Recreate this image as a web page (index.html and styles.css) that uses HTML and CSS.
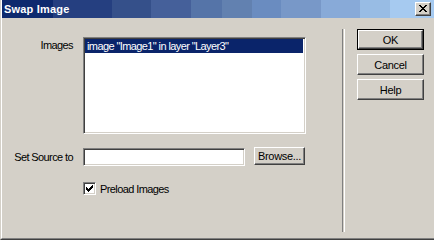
FILE: index.html
```html
<!DOCTYPE html>
<html>
<head>
<meta charset="utf-8">
<link rel="stylesheet" href="styles.css">
</head>
<body>
<div class="window">
  <div class="frame">
    <div class="titlebar">
      <span class="title">Swap Image</span>
      <div class="close">
        <svg width="8" height="7" viewBox="0 0 8 7" shape-rendering="crispEdges"><path fill="#000" d="M0 0h2v1H0z M6 0h2v1H6z M1 1h2v1H1z M5 1h2v1H5z M2 2h4v1H2z M3 3h2v1H3z M2 4h4v1H2z M1 5h2v1H1z M5 5h2v1H5z M0 6h2v1H0z M6 6h2v1H6z"/></svg>
      </div>
    </div>
    <div class="client">
      <div class="form">
        <div class="label label-top">Images</div>
        <div class="listbox">
          <div class="item selected">image "Image1" in layer "Layer3"</div>
        </div>
        <div class="label label-src">Set Source to</div>
        <div class="source-row">
          <div class="textbox"></div>
          <div class="btn browse">Browse...</div>
        </div>
        <div></div>
        <div class="check">
          <span class="box">
            <svg width="7" height="7" viewBox="0 0 7 7" shape-rendering="crispEdges"><path fill="#000" d="M0 2h1v3H0z M1 3h1v3H1z M2 4h1v3H2z M3 3h1v3H3z M4 2h1v3H4z M5 1h1v3H5z M6 0h1v3H6z"/></svg>
          </span>
          <span class="check-text">Preload Images</span>
        </div>
      </div>
      <div class="sep"></div>
      <div class="buttons">
        <div class="btn default"><div class="btn-inner">OK</div></div>
        <div class="btn">Cancel</div>
        <div class="btn">Help</div>
      </div>
    </div>
  </div>
</div>
</body>
</html>
```
FILE: styles.css
```css
html, body {
  margin: 0;
  padding: 0;
  background: #d4d0c8;
}
body {
  font-family: "Liberation Sans", Arial, sans-serif;
  font-size: 11px;
  letter-spacing: -0.6px;
  color: #000;
}
.window {
  width: 434px;
  height: 240px;
  box-sizing: border-box;
  border-left: 1px solid #d4d0c8;
  border-bottom: 1px solid #404040;
  background: #d4d0c8;
  overflow: hidden;
}
.frame {
  height: 100%;
  box-sizing: border-box;
  border-left: 1px solid #ffffff;
  border-bottom: 1px solid #808080;
  display: flex;
  flex-direction: column;
}
.titlebar {
  height: 18px;
  flex: none;
  display: flex;
  align-items: center;
  background: linear-gradient(to right,
    #0e2a6e 0px, #0e2a6e 51px,
    #253f80 51px, #253f80 110px,
    #35508a 110px, #35508a 149px,
    #45609a 149px, #45609a 189px,
    #5574a8 189px, #5574a8 220px,
    #6281b0 220px, #6281b0 250px,
    #6a8cc0 250px, #6a8cc0 279px,
    #7898c8 279px, #7898c8 319px,
    #88aad8 319px, #88aad8 358px,
    #98bce4 358px, #98bce4 388px,
    #a6caf0 388px);
}
.title {
  padding-left: 2px;
  color: #fff;
  font-weight: bold;
  font-size: 11px;
  letter-spacing: 0.2px;
}
.close {
  margin-left: auto;
  margin-right: 3px;
  width: 16px;
  height: 14px;
  box-sizing: border-box;
  background: #d4d0c8;
  border: 1px solid;
  border-color: #ffffff #404040 #404040 #ffffff;
  box-shadow: inset -1px -1px #808080;
  display: flex;
  align-items: center;
  justify-content: center;
}
.close svg { display: block; margin-left: -1px; margin-top: -1px; }
.client {
  flex: 1;
  display: flex;
  align-items: flex-start;
}
.form {
  width: 340px;
  flex: none;
  display: grid;
  grid-template-columns: 71px auto;
  column-gap: 10px;
  padding-top: 19px;
}
.label {
  text-align: right;
  align-self: center;
  line-height: 13px;
  white-space: nowrap;
}
.label-top {
  align-self: start;
  padding-top: 2px;
}
.label-src {
  margin-top: 13px;
  padding-top: 2px;
}
.listbox {
  width: 223px;
  height: 97px;
  box-sizing: border-box;
  background: #fff;
  border: 1px solid;
  border-color: #808080 #ffffff #ffffff #808080;
  box-shadow: inset 1px 1px #404040, inset -1px -1px #d4d0c8;
  padding: 2px 2px;
}
.item {
  height: 14px;
  line-height: 14px;
  padding-left: 2px;
  white-space: nowrap;
}
.item.selected {
  background: #0a246a;
  color: #fff;
  margin: -1px 0 0 -1px;
}
.source-row {
  margin-top: 13px;
  display: flex;
  align-items: flex-start;
  height: 19px;
}
.textbox {
  margin-top: 1px;
  width: 162px;
  height: 18px;
  box-sizing: border-box;
  background: #fff;
  border: 1px solid;
  border-color: #808080 #ffffff #ffffff #808080;
  box-shadow: inset 1px 1px #404040, inset -1px -1px #d4d0c8;
}
.btn {
  box-sizing: border-box;
  width: 67px;
  height: 21px;
  background: #d4d0c8;
  border: 1px solid;
  border-color: #ffffff #404040 #404040 #ffffff;
  box-shadow: inset -1px -1px #808080;
  display: flex;
  align-items: center;
  justify-content: center;
  white-space: nowrap;
  letter-spacing: -0.3px;
}
.browse {
  margin-left: 9px;
  width: 51px;
  height: 18px;
}
.btn.default {
  border: 1px solid #000;
  box-shadow: none;
  padding: 0;
}
.btn-inner {
  width: 100%;
  height: 100%;
  box-sizing: border-box;
  border: 1px solid;
  border-color: #ffffff #404040 #404040 #ffffff;
  box-shadow: inset -1px -1px #808080;
  display: flex;
  align-items: center;
  justify-content: center;
}
.check {
  margin-top: 16px;
  display: flex;
  align-items: center;
}
.box {
  width: 13px;
  height: 13px;
  box-sizing: border-box;
  background: #fff;
  border: 1px solid;
  border-color: #808080 #ffffff #ffffff #808080;
  box-shadow: inset 1px 1px #404040, inset -1px -1px #d4d0c8;
  display: flex;
  align-items: center;
  justify-content: center;
}
.box svg { display: block; }
.check-text {
  margin-left: 4px;
}
.sep {
  flex: none;
  width: 1px;
  height: 203px;
  margin-top: 11px;
  border-left: 1px solid #808080;
  border-right: 1px solid #ffffff;
}
.buttons {
  margin-top: 11px;
  margin-left: 12px;
  display: flex;
  flex-direction: column;
  gap: 4px;
}
```
